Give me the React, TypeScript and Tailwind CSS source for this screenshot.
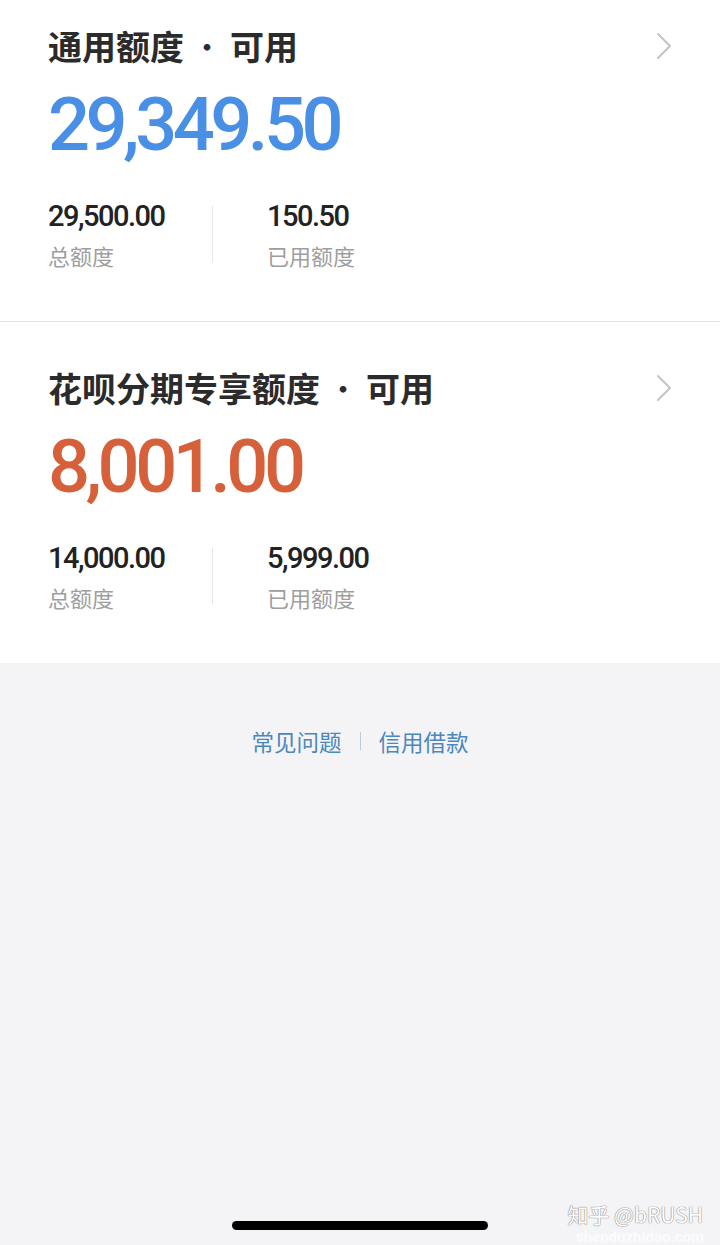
import React from "react";

const cjk = "font-['Noto_Sans_CJK_SC','Noto_Sans',sans-serif]";
const num = "font-['Roboto','Noto_Sans',sans-serif]";

function Chevron() {
  return (
    <svg width="20" height="28" viewBox="0 0 20 28" fill="none">
      <path d="M4 2 L16 14 L4 26" stroke="#c4c4c4" strokeWidth="2" strokeLinecap="round" strokeLinejoin="round" />
    </svg>
  );
}

function Section({
  title,
  amount,
  color,
  total,
  used,
  top,
}: {
  title: string;
  amount: string;
  color: string;
  total: string;
  used: string;
  top: string;
}) {
  return (
    <div className={`bg-white ${top} pb-[51px] pl-[48px] pr-[46px]`}>
      <div className="flex h-[48px] items-center justify-between">
        <div className={`${cjk} text-[34px] font-semibold leading-[48px] text-[#2b2b2b] flex items-center`}>
          <span>{title}</span>
          <span className="mx-[10px] text-[26px]">·</span>
          <span>可用</span>
        </div>
        <Chevron />
      </div>
      <div
        className={`${num} mt-[15px] h-[80px] text-[74px] font-medium leading-[80px] tracking-[-4.5px] ${color}`}
      >
        {amount}
      </div>
      <div className="mt-[33px] flex">
        <div className="w-[164px]">
          <div className={`${num} h-[36px] text-[29px] font-medium leading-[36px] tracking-[-1.5px] text-[#222]`}>{total}</div>
          <div className={`${cjk} mt-[6px] h-[30px] text-[22px] leading-[30px] text-[#9e9e9e]`}>总额度</div>
        </div>
        <div className="mt-[8px] h-[56px] w-px bg-[#e6e6e6]" />
        <div className="pl-[54px]">
          <div className={`${num} h-[36px] text-[29px] font-medium leading-[36px] tracking-[-1.5px] text-[#222]`}>{used}</div>
          <div className={`${cjk} mt-[6px] h-[30px] text-[22px] leading-[30px] text-[#9e9e9e]`}>已用额度</div>
        </div>
      </div>
    </div>
  );
}

export default function App() {
  return (
    <div className="flex min-h-[1245px] w-[720px] flex-col bg-[#f4f4f7]">
      <Section
        title="通用额度"
        amount="29,349.50"
        color="text-[#4a8fe6]"
        total="29,500.00"
        used="150.50"
        top="pt-[22px]"
      />
      <div className="h-px bg-[#e3e3e3]" />
      <Section
        title="花呗分期专享额度"
        amount="8,001.00"
        color="text-[#d6603a]"
        total="14,000.00"
        used="5,999.00"
        top="pt-[42px]"
      />
      <div className="relative flex-1">
        <div className={`${cjk} flex items-center justify-center pt-[63px] text-[22.5px] leading-[30px] text-[#4b88bd]`}>
          <span>常见问题</span>
          <span className="mx-[18px] h-[18px] w-px bg-[#b9cbdc]" />
          <span>信用借款</span>
        </div>
        <div className="absolute bottom-[15px] left-[232px] h-[9px] w-[256px] rounded-full bg-black" />
        <div
          className={`${cjk} absolute bottom-[20px] right-[17px] text-[21px] leading-[22px] text-white [text-shadow:0_0_1px_#777,0_0_1px_#777]`}
        >
          知乎 @bRUSH
        </div>
        <div className={`${num} absolute bottom-0 right-[16px] text-[15px] font-bold leading-[16px] text-white/70`}>
          shenduzhidao.com
        </div>
      </div>
    </div>
  );
}
